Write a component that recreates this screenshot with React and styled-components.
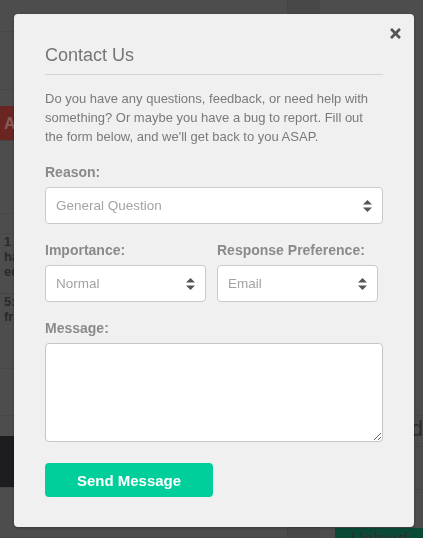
import styled, { createGlobalStyle } from 'styled-components'
import { FaTimes } from 'react-icons/fa'

const GlobalStyle = createGlobalStyle`
    html, body {
        margin: 0;
        padding: 0;
        background: #4d4d4d;
        font-family: "Liberation Sans", Arial, sans-serif;
    }
`

// dimmed page behind the modal
const Page = styled.div`
    display: flex;
    width: 423px;
    height: 538px;
    overflow: hidden;
    background: #4d4d4d;
`

const MainColumn = styled.div`
    width: 287px;
    display: flex;
    flex-direction: column;
`

const Row = styled.div`
    height: ${p => p.h}px;
    background: ${p => p.bg || 'transparent'};
    border-bottom: 1px solid ${p => p.line || '#444'};
    color: #2a2a2a;
    font-size: 13px;
    font-weight: bold;
    padding-left: 4px;
    box-sizing: border-box;
`

const SideStrip = styled.div`
    width: 32px;
    background: #484848;
    border-left: 1px solid #444;
`

const SideColumn = styled.div`
    flex: 1;
    display: flex;
    flex-direction: column;
    justify-content: flex-end;
`

const SideRow = styled.div`
    height: ${p => p.h}px;
    border-top: 1px solid #474747;
    color: #2c2c2c;
    font-size: 22px;
    text-align: right;
    overflow: hidden;
`

const UploadBar = styled.div`
    height: 10px;
    margin-left: 15px;
    background: #0b4a37;
    color: #2f2f2f;
    font-size: 18px;
    line-height: 22px;
    padding-left: 16px;
    overflow: hidden;
`

const Modal = styled.div`
    position: fixed;
    top: 14px;
    left: 14px;
    width: 400px;
    height: 513px;
    box-sizing: border-box;
    background: #f0f0f0;
    border-radius: 4px;
    padding: 30px 31px 30px 31px;
    box-shadow: 0 1px 3px rgba(0, 0, 0, 0.3);
`

const Close = styled.button`
    position: absolute;
    top: 12px;
    right: 11px;
    border: none;
    background: none;
    padding: 0;
    color: #555;
    display: flex;
    cursor: pointer;
`

const Title = styled.h2`
    margin: 0;
    font-size: 18px;
    font-weight: normal;
    color: #757575;
    line-height: 22px;
    padding-bottom: 8px;
    border-bottom: 1px solid #d4d4d4;
`

const Intro = styled.p`
    margin: 14px 0 0 0;
    font-size: 13px;
    line-height: 19px;
    color: #7a7a7a;
`

const Label = styled.label`
    display: block;
    margin-top: 18px;
    margin-bottom: 7px;
    font-size: 14px;
    font-weight: bold;
    color: #8a8a8a;
`

const Cols = styled.div`
    display: grid;
    grid-template-columns: 161px 161px;
    column-gap: 11px;
`

const SelectWrap = styled.div`
    position: relative;
    height: 37px;

    & svg {
        position: absolute;
        right: 11px;
        top: 13px;
        pointer-events: none;
    }
`

const Select = styled.select`
    appearance: none;
    width: 100%;
    height: 100%;
    box-sizing: border-box;
    border: 1px solid #cacaca;
    border-radius: 4px;
    background: #fff;
    padding: 0 10px;
    font-family: inherit;
    font-size: 13.5px;
    color: #a3a3a3;
    outline: none;
`

const TextArea = styled.textarea`
    display: block;
    width: 100%;
    height: 99px;
    box-sizing: border-box;
    border: 1px solid #c6c6c6;
    border-radius: 4px;
    background: #fff;
    resize: vertical;
    outline: none;
`

const SendButton = styled.button`
    margin-top: 21px;
    width: 168px;
    height: 34px;
    border: none;
    border-radius: 4px;
    background: #00cf9b;
    color: #fff;
    font-family: inherit;
    font-size: 15px;
    font-weight: bold;
    cursor: pointer;
`

function Arrows() {
    return (
        <svg width="9" height="12" viewBox="0 0 9 12">
            <path d="M4.5 0 L9 4.5 H0 Z" fill="#555" />
            <path d="M4.5 12 L9 7.5 H0 Z" fill="#555" />
        </svg>
    )
}

function Dropdown({ value }) {
    return (
        <SelectWrap>
            <Select defaultValue={value}>
                <option>{value}</option>
            </Select>
            <Arrows />
        </SelectWrap>
    )
}

export default function App() {
    return (
        <>
            <GlobalStyle />
            <Page>
                <MainColumn>
                    <Row h={32} line="#474747" />
                    <Row h={58} line="#474747" />
                    <Row h={16} line="transparent" />
                    <Row h={35} bg="#6a2523" style={{ color: '#8a5a58', lineHeight: '35px', fontSize: '16px' }}>A</Row>
                    <Row h={73} line="#474747" />
                    <Row h={20} line="#474747" />
                    <Row h={60} line="#444">1 l<br />han<br />ed</Row>
                    <Row h={75} line="#474747">5:1<br />fro</Row>
                    <Row h={47} line="#474747" />
                    <Row h={20} line="transparent" />
                    <Row h={52} bg="#1d1d1f" line="#444" />
                    <Row h={50} line="#474747" />
                </MainColumn>
                <SideStrip />
                <SideColumn>
                    <SideRow h={30}>ed</SideRow>
                    <SideRow h={42} />
                    <SideRow h={38} />
                    <UploadBar>Upload</UploadBar>
                </SideColumn>
            </Page>

            <Modal>
                <Close aria-label="Close"><FaTimes size={15} /></Close>
                <Title>Contact Us</Title>
                <Intro>
                    Do you have any questions, feedback, or need help with something? Or maybe you have a bug to report. Fill out the form below, and we'll get back to you ASAP.
                </Intro>

                <Label>Reason:</Label>
                <Dropdown value="General Question" />

                <Cols>
                    <div>
                        <Label>Importance:</Label>
                        <Dropdown value="Normal" />
                    </div>
                    <div>
                        <Label>Response Preference:</Label>
                        <Dropdown value="Email" />
                    </div>
                </Cols>

                <Label>Message:</Label>
                <TextArea />

                <SendButton>Send Message</SendButton>
            </Modal>
        </>
    )
}
